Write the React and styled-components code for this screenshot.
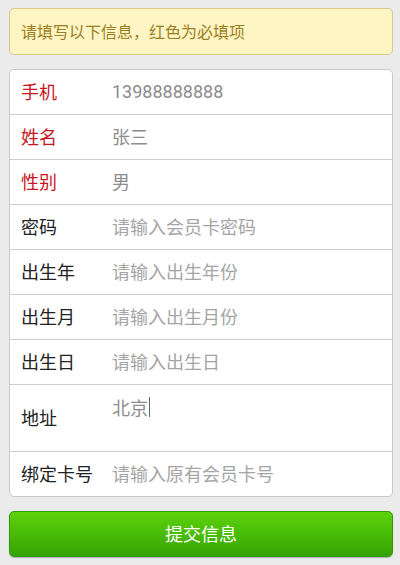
import React from "react";
import styled, { createGlobalStyle } from "styled-components";

const Global = createGlobalStyle`
  html, body { margin: 0; padding: 0; background: #ebebeb; }
  body { font-family: Roboto, "Noto Sans CJK SC", sans-serif; }
  * { box-sizing: border-box; }
`;

const Page = styled.div`
  display: flex;
  flex-direction: column;
  gap: 14px;
  padding: 8px 7px 9px 9px;
`;

const Notice = styled.div`
  height: 47px;
  display: flex;
  align-items: center;
  padding: 0 11px 2px;
  background: #fef5c4;
  border: 1px solid #d9c98e;
  border-radius: 5px;
  color: #9c7e24;
  font-size: 16px;
`;

const Card = styled.div`
  background: #fff;
  border: 1px solid #c9c9c9;
  border-radius: 5px;
  overflow: hidden;
`;

const Row = styled.div`
  box-sizing: content-box;
  display: flex;
  align-items: ${(p) => (p.$tall ? "flex-start" : "center")};
  height: ${(p) => (p.$tall ? "64px" : "42px")};
  border-top: ${(p) => (p.$first ? "none" : "1px solid #cdcdcd")};
  padding: 0 11px 2px;
`;

const Label = styled.div`
  width: 91px;
  flex-shrink: 0;
  font-size: 18px;
  color: ${(p) => (p.$required ? "#c8161e" : "#222")};
  align-self: center;
  white-space: nowrap;
`;

const Value = styled.div`
  flex: 1;
  font-size: 18px;
  color: #8c8c8c;
  padding-top: ${(p) => (p.$tall ? "9px" : "0")};
  display: flex;
  align-items: center;
`;

const Placeholder = styled.span`
  color: #a5a5a5;
`;

const Caret = styled.span`
  display: inline-block;
  width: 1px;
  height: 20px;
  margin-left: 1px;
  background: #666;
`;

const Submit = styled.button`
  height: 46px;
  width: 100%;
  border: 1px solid #2f9a08;
  border-radius: 5px;
  background: linear-gradient(to bottom, #5dd20b 0%, #47b907 55%, #36a204 100%);
  color: #fff;
  font-family: Roboto, "Noto Sans CJK SC", sans-serif;
  font-size: 18px;
  box-shadow: 0 1px 1px rgba(0, 0, 0, 0.25);
  padding: 0 0 2px;
`;

const rows = [
  { label: "手机", value: "13988888888", required: true },
  { label: "姓名", value: "张三", required: true },
  { label: "性别", value: "男", required: true },
  { label: "密码", placeholder: "请输入会员卡密码" },
  { label: "出生年", placeholder: "请输入出生年份" },
  { label: "出生月", placeholder: "请输入出生月份" },
  { label: "出生日", placeholder: "请输入出生日" },
  { label: "地址", value: "北京", tall: true, caret: true },
  { label: "绑定卡号", placeholder: "请输入原有会员卡号" },
];

export default function App() {
  return (
    <>
      <Global />
      <Page>
        <Notice>请填写以下信息，红色为必填项</Notice>
        <Card>
          {rows.map((r, i) => (
            <Row key={r.label} $first={i === 0} $tall={r.tall}>
              <Label $required={r.required}>{r.label}</Label>
              <Value $tall={r.tall}>
                {r.value ? r.value : <Placeholder>{r.placeholder}</Placeholder>}
                {r.caret && <Caret />}
              </Value>
            </Row>
          ))}
        </Card>
        <Submit>提交信息</Submit>
      </Page>
    </>
  );
}
